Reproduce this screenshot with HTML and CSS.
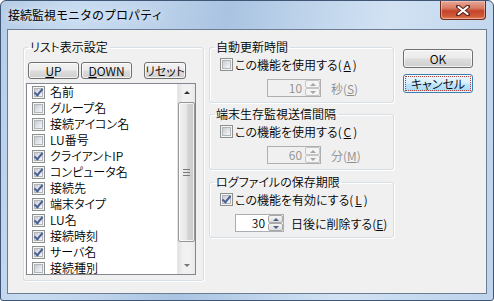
FILE: index.html
```html
<!DOCTYPE html>
<html lang="ja">
<head>
    <meta charset="UTF-8">
    <title>接続監視モニタのプロパティ</title>
    <link rel="stylesheet" href="styles.css">
</head>
<body>
    <div class="window">
        <div class="titlebar">
            <span class="caption">接続監視モニタのプロパティ</span>
            <span class="close">
                <svg width="14" height="11" viewBox="0 0 14 11">
                    <path d="M2 1.5 L12 9.5 M12 1.5 L2 9.5" stroke="#5a2418" stroke-width="4" stroke-linecap="round"/>
                    <path d="M2.5 2 L11.5 9 M11.5 2 L2.5 9" stroke="#fff" stroke-width="2.2" stroke-linecap="round"/>
                </svg>
            </span>
        </div>

        <div class="client">
            <fieldset class="group list-group">
                <legend>リスト表示設定</legend>
                <div class="btn-row">
                    <button class="btn btn-up"><u>U</u>P</button>
                    <button class="btn btn-down"><u>D</u>OWN</button>
                    <button class="btn btn-reset">リセット</button>
                </div>
                <div class="listbox">
                    <ul class="items">
                        <li><span class="cb checked"></span>名前</li>
                        <li><span class="cb"></span>グループ名</li>
                        <li><span class="cb"></span>接続アイコン名</li>
                        <li><span class="cb"></span>LU番号</li>
                        <li><span class="cb checked"></span>クライアントIP</li>
                        <li><span class="cb checked"></span>コンピュータ名</li>
                        <li><span class="cb checked"></span>接続先</li>
                        <li><span class="cb checked"></span>端末タイプ</li>
                        <li><span class="cb checked"></span>LU名</li>
                        <li><span class="cb checked"></span>接続時刻</li>
                        <li><span class="cb checked"></span>サーバ名</li>
                        <li><span class="cb"></span>接続種別</li>
                    </ul>
                    <div class="vscroll">
                        <span class="arrow"><span class="tri-up"></span></span>
                        <span class="thumb"><span class="grip"></span></span>
                        <span class="arrow"><span class="tri-down"></span></span>
                    </div>
                </div>
            </fieldset>

            <div class="options">
                <fieldset class="group">
                    <legend>自動更新時間</legend>
                    <label class="check-row"><span class="cb"></span>この機能を使用する(<u>A</u>)</label>
                    <div class="spin-row">
                        <span class="spin disabled wide">
                            <span class="spin-value">10</span>
                            <span class="spin-btns"><span class="sb"><span class="tri-up"></span></span><span class="sb"><span class="tri-down"></span></span></span>
                        </span>
                        <span class="unit disabled">秒(<u>S</u>)</span>
                    </div>
                </fieldset>

                <fieldset class="group">
                    <legend>端末生存監視送信間隔</legend>
                    <label class="check-row"><span class="cb"></span>この機能を使用する(<u>C</u>)</label>
                    <div class="spin-row">
                        <span class="spin disabled wide">
                            <span class="spin-value">60</span>
                            <span class="spin-btns"><span class="sb"><span class="tri-up"></span></span><span class="sb"><span class="tri-down"></span></span></span>
                        </span>
                        <span class="unit disabled">分(<u>M</u>)</span>
                    </div>
                </fieldset>

                <fieldset class="group">
                    <legend>ログファイルの保存期限</legend>
                    <label class="check-row"><span class="cb checked"></span>この機能を有効にする(<u>L</u>)</label>
                    <div class="spin-row keep">
                        <span class="spin">
                            <span class="spin-value">30</span>
                            <span class="spin-btns"><span class="sb"><span class="tri-up"></span></span><span class="sb"><span class="tri-down"></span></span></span>
                        </span>
                        <span class="unit">日後に削除する(<u>E</u>)</span>
                    </div>
                </fieldset>
            </div>

            <div class="actions">
                <button class="btn">OK</button>
                <button class="btn focused"><span class="focus-rect">キャンセル</span></button>
            </div>
        </div>
    </div>
</body>
</html>
```

FILE: styles.css
```css
body {
    margin: 0;
    font-family: "Noto Sans CJK JP", sans-serif;
    font-size: 12px;
    font-weight: 350;
    color: #000;
}

.window {
    width: 494px;
    height: 301px;
    box-sizing: border-box;
    border: 1px solid #3f5676;
    border-radius: 6px 6px 3px 3px;
    padding: 0 6px 6px;
    display: flex;
    flex-direction: column;
    background: linear-gradient(100deg, #b6cde7 0%, #c8dbf0 14%, #bed3eb 28%, #a9c3e1 42%, #bcd2ea 55%, #d2e2f3 72%, #c4d8ee 88%, #bfd4ec 100%);
}

.titlebar {
    height: 28px;
    display: flex;
    align-items: flex-start;
}

.caption {
    padding: 6px 0 0 1px;
    line-height: 16px;
    font-size: 12px;
    font-weight: 400;
    text-shadow: 0 0 6px rgba(255, 255, 255, 0.9);
}

.close {
    margin-left: auto;
    margin-right: 1px;
    width: 46px;
    height: 19px;
    box-sizing: border-box;
    border: 1px solid #6e2a1c;
    border-top: none;
    border-radius: 0 0 4px 4px;
    display: flex;
    align-items: center;
    justify-content: center;
    background: linear-gradient(#e6a898 0%, #d87a63 40%, #c4432a 55%, #d05a38 85%, #e08a60 100%);
    box-shadow: inset 0 0 0 1px rgba(255, 210, 200, 0.5);
}

.client {
    flex: 1;
    border: 1px solid #6b7d93;
    background: #f0f0f0;
    display: flex;
    align-items: flex-start;
    padding: 10px 0 0 15px;
}

.group {
    margin: 0;
    padding: 0;
    min-width: 0;
    border: 1px solid #d5dfe5;
    border-radius: 3px;
    box-shadow: inset 1px 1px 0 #fff, 1px 1px 0 #fff;
}

.group legend {
    margin-left: 4px;
    padding: 0 2px;
    line-height: 14px;
    font-feature-settings: "palt";
}

/* list group */

.list-group {
    width: 181px;
    box-sizing: border-box;
    padding-bottom: 5px;
}

.btn-row {
    display: flex;
    padding-top: 8px;
    padding-left: 4px;
}

.btn {
    font-family: inherit;
    font-size: 12px;
    font-weight: 350;
    height: 19px;
    padding: 0;
    border: 1px solid #707070;
    border-radius: 3px;
    color: #000;
    line-height: 15px;
    background: linear-gradient(#f2f2f2 0%, #ebebeb 48%, #dddddd 52%, #cfcfcf 100%);
    box-shadow: inset 0 0 0 1px rgba(255, 255, 255, 0.7);
    font-feature-settings: "palt";
}

.btn-row .btn {
    height: 17px;
    line-height: 13px;
}

.btn-up,
.btn-down {
    width: 51px;
}

.btn-down {
    margin-left: 2px;
}

.btn-reset {
    width: 42px;
    margin-left: 12px;
}

.listbox {
    margin: 4px 0 0 2px;
    width: 170px;
    height: 192px;
    box-sizing: border-box;
    border: 1px solid #828790;
    background: #fff;
    display: flex;
}

.items {
    flex: 1;
    margin: 0;
    padding: 0;
    list-style: none;
    overflow: hidden;
}

.items li {
    height: 16px;
    display: flex;
    align-items: center;
    gap: 5px;
    padding-left: 5px;
    line-height: 16px;
    font-feature-settings: "palt";
    white-space: nowrap;
}

.cb {
    position: relative;
    flex: none;
    width: 13px;
    height: 13px;
    box-sizing: border-box;
    border: 1px solid #8e8f8f;
    background: #f4f4f4;
    padding: 1px;
}

.cb::before {
    content: "";
    display: block;
    width: 9px;
    height: 9px;
    box-sizing: border-box;
    border: 1px solid #b0b5ba;
    background: linear-gradient(135deg, #c9cdd3 0%, #e4e6e9 60%, #f7f7f7 100%);
}

.cb.checked::after {
    content: "";
    position: absolute;
    left: 3px;
    top: 0px;
    width: 3px;
    height: 7px;
    border-right: 2px solid #4a5f97;
    border-bottom: 2px solid #4a5f97;
    transform: rotate(40deg);
}

.vscroll {
    width: 17px;
    display: flex;
    flex-direction: column;
    background: linear-gradient(90deg, #e3e3e3, #f1f1f1 30%, #f1f1f1 70%, #e8e8e8);
    border-left: 1px solid #e6e6e6;
}

.arrow {
    height: 17px;
    display: flex;
    align-items: center;
    justify-content: center;
}

.tri-up,
.tri-down {
    width: 0;
    height: 0;
    border-left: 3px solid transparent;
    border-right: 3px solid transparent;
}

.tri-up {
    border-bottom: 3px solid #333;
}

.tri-down {
    border-top: 3px solid #333;
}

.vscroll .arrow:last-child {
    margin-top: auto;
}

.vscroll .arrow .tri-down {
    border-top-color: #777;
}

.thumb {
    margin: 1px 0 0 0;
    height: 140px;
    box-sizing: border-box;
    border: 1px solid #979797;
    border-radius: 2px;
    background: linear-gradient(90deg, #f1f1f1, #e6e6e6 50%, #d6d6d6 51%, #cccccc);
    box-shadow: inset 0 0 0 1px rgba(255, 255, 255, 0.7);
    display: flex;
    align-items: center;
    justify-content: center;
}

.grip {
    width: 7px;
    height: 7px;
    background: repeating-linear-gradient(#7b7b7b 0 1px, transparent 1px 3px);
}

/* option groups */

.options {
    margin-left: 5px;
    width: 185px;
    display: flex;
    flex-direction: column;
    gap: 4px;
}

.options .group {
    padding: 2px 0 5px 0;
}

.options .group:last-child {
    margin-top: 1px;
}

.check-row {
    height: 16px;
    margin-left: 10px;
    display: flex;
    align-items: center;
    gap: 2px;
    font-feature-settings: "palt";
    white-space: nowrap;
}

.spin-row {
    display: flex;
    align-items: center;
    gap: 10px;
    margin-top: 7px;
    margin-left: 57px;
    font-feature-settings: "palt";
}

.spin-row.keep {
    margin-left: 25px;
    gap: 7px;
}

.spin {
    width: 49px;
    height: 18px;
    box-sizing: border-box;
    border: 1px solid #abadb3;
    background: #fff;
    display: flex;
    align-items: stretch;
}

.spin.wide {
    width: 54px;
}

.spin.disabled {
    border-color: #afafaf;
    background: #f0f0f0;
    color: #8d8d8d;
}

.spin-value {
    flex: 1;
    text-align: right;
    padding-right: 3px;
    line-height: 16px;
}

.spin-btns {
    width: 15px;
    display: flex;
    flex-direction: column;
}

.sb {
    flex: 1;
    display: flex;
    align-items: center;
    justify-content: center;
    border: 1px solid #a8a8a8;
    border-radius: 2px;
    background: linear-gradient(#f4f4f4, #dedede);
}

.spin .sb .tri-up {
    border-bottom-color: #4d6185;
}

.spin .sb .tri-down {
    border-top-color: #4d6185;
}

.spin.disabled .sb {
    border-color: #c5c5c5;
    background: #f4f4f4;
}

.spin.disabled .sb .tri-up {
    border-bottom-color: #a6a6a6;
}

.spin.disabled .sb .tri-down {
    border-top-color: #a6a6a6;
}

.unit.disabled {
    color: #8d8d8d;
}

/* dialog buttons */

.actions {
    margin: 9px 0 0 9px;
    width: 70px;
    display: flex;
    flex-direction: column;
    gap: 6px;
}

.actions .btn {
    width: 70px;
}

.btn.focused {
    border-color: #3c7fb1;
    background: linear-gradient(#eaf6fd 0%, #d9f0fc 48%, #bee6fd 52%, #a7d9f5 100%);
    padding: 2px;
}

.focus-rect {
    display: block;
    height: 13px;
    line-height: 13px;
    outline: 1px dotted #b04040;
}
```
